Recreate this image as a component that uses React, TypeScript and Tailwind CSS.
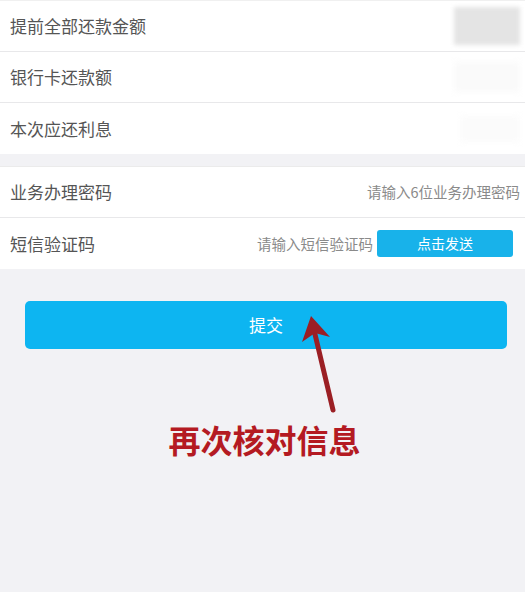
import React from "react";

const font = { fontFamily: '"Noto Sans CJK SC", "Noto Sans", sans-serif' };

function Row({ label, right, last }: { label: string; right?: React.ReactNode; last?: boolean }) {
  return (
    <div className={`flex items-center justify-between h-[51px] pl-[10px] pr-[5px] bg-white ${last ? "" : "border-b border-[#e8e8ea]"}`}>
      <span className="text-[17px] text-[#555555]">{label}</span>
      {right}
    </div>
  );
}

export default function App() {
  return (
    <div className="relative w-[525px] h-[592px] bg-[#f2f2f5] overflow-hidden" style={font}>
      <div className="bg-white border-t border-[#f0f0f0]">
        <Row label="提前全部还款金额" right={<div className="w-[66px] h-[38px] bg-[#e4e4e4] blur-[2px]" />} />
        <Row label="银行卡还款额" right={<div className="w-[66px] h-[30px] bg-[#fafafa] blur-[3px]" />} />
        <Row label="本次应还利息" right={<div className="w-[60px] h-[26px] bg-[#fbfbfb] blur-[3px]" />} last />
      </div>
      <div className="h-[12px]" />
      <div className="bg-white border-t border-[#ebebeb]">
        <Row label="业务办理密码" right={<span className="text-[14.5px] text-[#8a8a8a]">请输入6位业务办理密码</span>} />
        <Row
          label="短信验证码"
          last
          right={
            <div className="flex items-center gap-[4px] pr-[7px]">
              <span className="text-[14.5px] text-[#8a8a8a]">请输入短信验证码</span>
              <div className="w-[136px] h-[27px] rounded-[3px] bg-[#18b2ea] flex items-center justify-center text-[14px] text-white">点击发送</div>
            </div>
          }
        />
      </div>
      <div className="px-[25px] pt-[32px] pr-[18px]">
        <div className="h-[48px] rounded-[5px] bg-[#0db5f1] flex items-center justify-center text-[17px] text-white">提交</div>
      </div>
      <div className="flex justify-center pt-[66px] pl-[4px]">
        <span className="text-[32px] font-bold text-[#b41a22]" style={{ fontFamily: '"Noto Sans CJK SC", sans-serif' }}>再次核对信息</span>
      </div>
      <svg className="absolute left-0 top-0" width="525" height="592" viewBox="0 0 525 592">
        <line x1="333" y1="410" x2="314" y2="330" stroke="#9b1f24" strokeWidth="5" strokeLinecap="round" />
        <polygon points="311,316 302,342 315,333 330,337" fill="#9b1f24" />
      </svg>
    </div>
  );
}
